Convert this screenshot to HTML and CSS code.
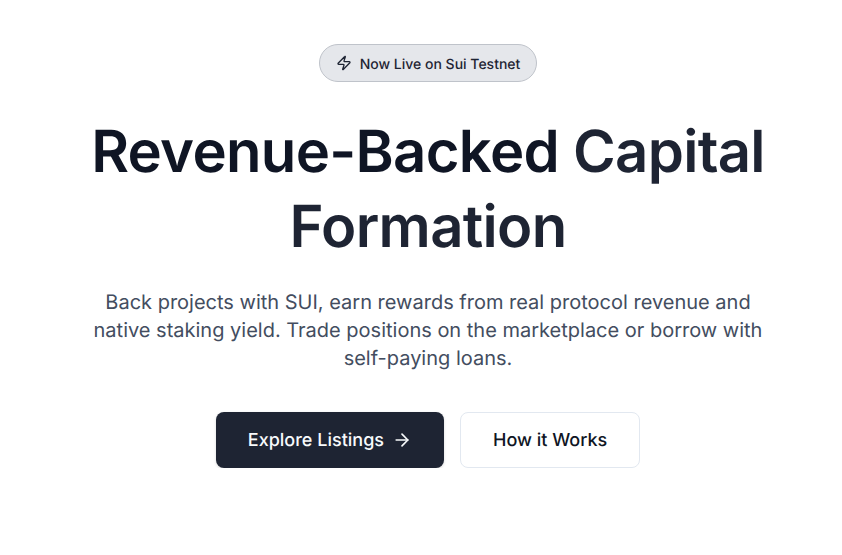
FILE: index.html
```html
<!DOCTYPE html>
<html lang="en">
<head>
    <meta charset="UTF-8">
    <meta name="viewport" content="width=device-width, initial-scale=1.0">
    <title>Revenue-Backed Capital Formation</title>
    <link rel="stylesheet" href="styles.css">
</head>
<body>
    <section class="hero">
        <div class="badge">
            <svg class="badge-icon" viewBox="0 0 24 24" fill="none" stroke="currentColor" stroke-width="2" stroke-linecap="round" stroke-linejoin="round">
                <path d="M4 14a1 1 0 0 1-.78-1.63l9.9-10.2a.5.5 0 0 1 .86.46l-1.92 6.02A1 1 0 0 0 13 10h7a1 1 0 0 1 .78 1.63l-9.9 10.2a.5.5 0 0 1-.86-.46l1.92-6.02A1 1 0 0 0 11 14z"/>
            </svg>
            <span class="badge-text">Now Live on Sui Testnet</span>
        </div>
        <h1>Revenue-Backed <span class="accent">Capital Formation</span></h1>
        <p class="lead">Back projects with SUI, earn rewards from real protocol revenue and native staking yield. Trade positions on the marketplace or borrow with self-paying loans.</p>
        <div class="actions">
            <a class="btn btn-primary" href="#">
                Explore Listings
                <svg class="btn-icon" viewBox="0 0 24 24" fill="none" stroke="currentColor" stroke-width="2" stroke-linecap="round" stroke-linejoin="round">
                    <path d="M5 12h14"/>
                    <path d="m12 5 7 7-7 7"/>
                </svg>
            </a>
            <a class="btn btn-outline" href="#">How it Works</a>
        </div>
    </section>
</body>
</html>
```

FILE: styles.css
```css
body {
    font-family: Inter, "Liberation Sans", sans-serif;
    background-color: #fff;
    margin: 0;
    padding: 0;
    text-rendering: geometricPrecision;
}
.hero {
    display: flex;
    flex-direction: column;
    align-items: center;
    padding: 44px 16px 0 30px;
    text-align: center;
}
.badge {
    display: flex;
    align-items: center;
    gap: 8px;
    height: 38px;
    box-sizing: border-box;
    padding: 0 16px;
    background-color: #e5e7eb;
    border: 1px solid #bfc3ca;
    border-radius: 19px;
    color: #1e2433;
    font-size: 14px;
    font-weight: 500;
}
.badge-text {
    padding-top: 2px;
}
.badge-icon {
    width: 16px;
    height: 16px;
}
h1 {
    margin: 32px 0 0;
    max-width: 700px;
    color: #0f1524;
    font-size: 58px;
    font-weight: 600;
    line-height: 75px;
    letter-spacing: -0.68px;
}
.accent {
    color: #1e2433;
}
.lead {
    margin: 24px 0 0;
    width: 672px;
    color: #434d60;
    font-size: 20px;
    line-height: 28px;
}
.actions {
    display: flex;
    gap: 16px;
    margin-top: 40px;
}
.btn {
    display: flex;
    align-items: center;
    justify-content: center;
    gap: 8px;
    height: 56px;
    box-sizing: border-box;
    padding: 0 32px;
    border-radius: 8px;
    font-size: 18px;
    font-weight: 500;
    text-decoration: none;
}
.btn-primary {
    background-color: #1e2433;
    color: #f8fafc;
    box-shadow: 0 1px 3px rgba(0, 0, 0, 0.15);
}
.btn-outline {
    background-color: #fff;
    border: 1px solid #e2e8f0;
    color: #0f1524;
}
.btn-icon {
    width: 20px;
    height: 20px;
}
```
